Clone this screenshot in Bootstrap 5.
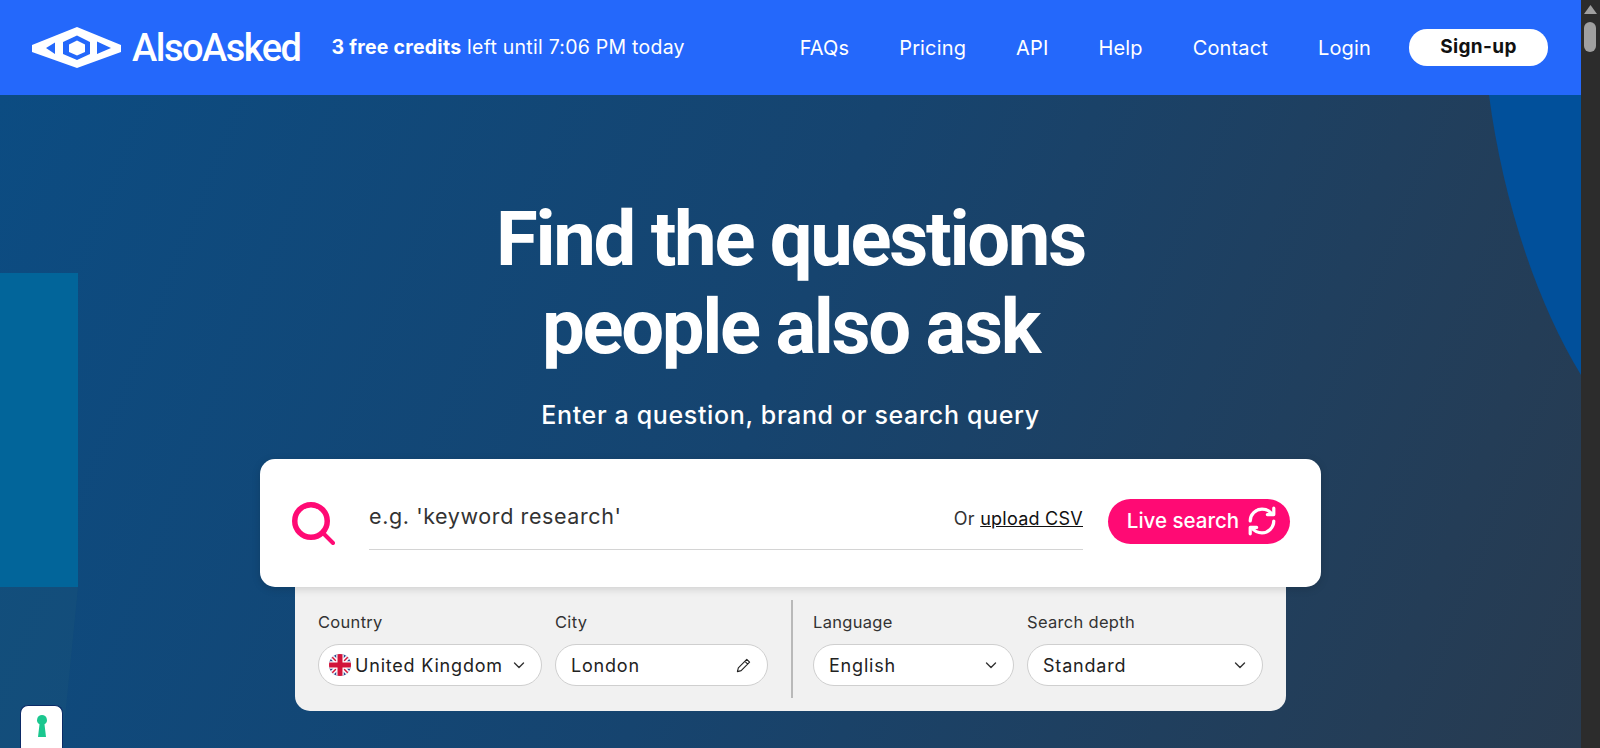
<!DOCTYPE html>
<html lang="en">

<head>
    <meta charset="UTF-8">
    <meta name="viewport" content="width=device-width, initial-scale=1.0">
    <title>AlsoAsked</title>
    <link href="https://cdn.jsdelivr.net/npm/bootstrap@5.3.0/dist/css/bootstrap.min.css" rel="stylesheet">
    <style>
        html, body { height: 748px; overflow: hidden; }
        body { font-family: Inter, "Liberation Sans", sans-serif; color: #212529; }

        .topbar { height: 95px; background: #2468fb; padding: 0 33px 0 32px; }
        .logo-text { font: 500 38px/1 Roboto, sans-serif; letter-spacing: -1.5px; color: #fff; margin-left: 10px; }
        .credits { font-size: 19.5px; color: #fff; margin-left: 31px; letter-spacing: .25px; }
        .credits b { font-weight: 700; }
        .menu-link { color: #fff; text-decoration: none; font-size: 20px; letter-spacing: .15px; }
        .menu-gap { gap: 50px; margin-right: 38px; }
        .signup { width: 139px; height: 37px; background: #fff; border-radius: 18px; color: #111; font-weight: 700; font-size: 19px; letter-spacing: .35px; text-decoration: none; }

        .hero { height: 653px; background: linear-gradient(112deg, #0c4c82 0%, #16446f 48%, #283b50 100%); overflow: hidden; }
        .hero-bg { position: absolute; top: 0; left: 0; }
        .hero-body { padding-top: 100px; z-index: 1; }
        .headline { font: 700 76px/88px Roboto, sans-serif; letter-spacing: -2.3px; color: #fff; margin: 0; }
        .subline { font-size: 25px; font-weight: 500; letter-spacing: .65px; color: #fff; margin: 28px 0 28px; line-height: 32px; }

        .search-card { width: 1061px; height: 128px; background: #fff; border-radius: 15px; padding: 0 30px 0 32px; box-shadow: 0 2px 8px rgba(0,0,0,.15); z-index: 2; }
        .search-field { width: 714px; height: 91px; margin-left: 34px; border-bottom: 1px solid #d4d4d4; padding-top: 41px; }
        .search-ph { font-size: 21.5px; letter-spacing: .6px; color: #333; line-height: 32px; }
        .upload { font-size: 18px; letter-spacing: .25px; color: #333; margin-top: 7px; line-height: 24px; }
        .upload a { color: #111; }
        .live-btn { width: 182px; height: 45px; background: #ff0a74; border-radius: 23px; color: #fff; font-size: 20.5px; font-weight: 500; margin: 0 0 4px 25px; border: 0; padding: 0 0 0 6px; }

        .options { width: 991px; height: 124px; background: #f1f1f1; border-radius: 0 0 15px 15px; padding: 13px 23px 0; }
        .opt-set { gap: 13px; }
        .opt-label { font-size: 16.5px; letter-spacing: .3px; color: #333; line-height: 20px; margin: 12px 0 12px; display: block; }
        .opt-box { height: 42px; background: #fff; border: 1px solid #cfcfcf; border-radius: 21px; font-size: 18px; letter-spacing: .8px; color: #222; padding: 0 16px 0 15px; }
        .opt-country { width: 224px; padding-left: 10px; }
        .opt-city { width: 213px; }
        .opt-lang { width: 201px; }
        .opt-depth { width: 236px; }
        .opt-rule { width: 2px; height: 98px; background: #b9b9b9; margin: 0 20px 0 23px; }

        .lock-tab { position: absolute; left: 20px; bottom: 0; width: 43px; height: 43px; background: #fff; border-radius: 8px 8px 0 0; border: 1px solid #0b2a66; border-bottom: 0; z-index: 3; }

        .scroll-bar { width: 19px; height: 748px; background: #2c2c2c; padding-top: 5px; }
        .scroll-thumb { width: 12px; height: 30px; background: #a0a0a0; border-radius: 6px; margin: 8px 0 0 3px; }
    </style>
</head>

<body class="d-flex m-0">
    <div class="flex-grow-1 position-relative">
        <nav class="topbar d-flex align-items-center">
            <svg width="90" height="42" viewBox="0 0 90 42">
                <path fill="#fff" fill-rule="evenodd" d="M0 18 45 0 89 18V25L45 41 0 25ZM14 21 23 15.500V27ZM65 14.500 79 21 65 27ZM45 8.500 58 15V27L45 33 31 27V15Z"/>
                <path fill="#fff" d="M45 13.500 53 17.500V25L45 28.500 37 25V17.500Z"/>
            </svg>
            <span class="logo-text">AlsoAsked</span>
            <span class="credits"><b>3 free credits</b> left until 7:06 PM today</span>
            <div class="d-flex align-items-center ms-auto">
                <div class="d-flex menu-gap">
                    <a class="menu-link" href="#">FAQs</a>
                    <a class="menu-link" href="#">Pricing</a>
                    <a class="menu-link" href="#">API</a>
                    <a class="menu-link" href="#">Help</a>
                    <a class="menu-link" href="#">Contact</a>
                    <a class="menu-link" href="#">Login</a>
                </div>
                <a class="signup d-flex align-items-center justify-content-center" href="#">Sign-up</a>
            </div>
        </nav>

        <section class="hero position-relative">
            <svg class="hero-bg" width="1581" height="653" viewBox="0 0 1581 653">
                <path fill="#01509b" d="M1489 0C1502 100 1535 205 1581 280V0Z"/>
                <rect x="0" y="178" width="78" height="314" fill="#02659a"/>
                <path fill="#1e5a78" fill-opacity=".25" d="M0 492H78L62 653H0Z"/>
            </svg>

            <div class="hero-body position-relative d-flex flex-column align-items-center text-center">
                <h1 class="headline">Find the questions<br>people also ask</h1>
                <p class="subline">Enter a question, brand or search query</p>

                <div class="search-card d-flex align-items-center position-relative">
                    <svg width="43" height="43" viewBox="0 0 43 43" fill="none" stroke="#ff0a74">
                        <circle cx="19" cy="19" r="16.250" stroke-width="5.500"/>
                        <path d="M31 31 41 41" stroke-width="4" stroke-linecap="round"/>
                    </svg>
                    <div class="search-field d-flex justify-content-between align-self-start">
                        <span class="search-ph">e.g. 'keyword research'</span>
                        <span class="upload">Or <a href="#">upload CSV</a></span>
                    </div>
                    <button class="live-btn d-flex align-items-center justify-content-center gap-2" type="button">
                        Live search
                        <svg width="30" height="30" viewBox="0 0 28 28" fill="none" stroke="#fff" stroke-width="3" stroke-linecap="round" stroke-linejoin="round">
                            <path d="M3 14C3 8 8 3 14 3C18 3 21 4.500 23.500 7.500"/>
                            <path d="M25 14C25 20 20 25 14 25C10 25 7 23.500 4.500 20.500"/>
                            <path d="M25 2V8H19"/>
                            <path d="M3 26V20H9"/>
                        </svg>
                    </button>
                </div>

                <div class="options d-flex text-start">
                    <div class="d-flex opt-set">
                        <div>
                            <span class="opt-label">Country</span>
                            <div class="opt-box opt-country d-flex align-items-center">
                                <svg class="flex-shrink-0 me-1" width="22" height="22" viewBox="0 0 22 22">
                                    <clipPath id="flagClip"><circle cx="11" cy="11" r="11"/></clipPath>
                                    <g clip-path="url(#flagClip)">
                                        <rect width="22" height="22" fill="#2b4a8f"/>
                                        <path d="M0 0 22 22M22 0 0 22" stroke="#fff" stroke-width="4.500"/>
                                        <path d="M0 0 22 22M22 0 0 22" stroke="#d2143a" stroke-width="1.500"/>
                                        <path d="M11 0V22M0 11H22" stroke="#fff" stroke-width="7.500"/>
                                        <path d="M11 0V22M0 11H22" stroke="#d2143a" stroke-width="5"/>
                                    </g>
                                </svg>
                                <span class="flex-grow-1 text-nowrap">United Kingdom</span>
                                <svg class="flex-shrink-0" width="12" height="12" viewBox="0 0 12 12" fill="none" stroke="#333" stroke-width="1.400" stroke-linecap="round" stroke-linejoin="round"><path d="M1.500 4 6 8.500 10.500 4"/></svg>
                            </div>
                        </div>
                        <div>
                            <span class="opt-label">City</span>
                            <div class="opt-box opt-city d-flex align-items-center justify-content-between">
                                <span>London</span>
                                <svg width="15" height="15" viewBox="0 0 16 16" fill="none" stroke="#222" stroke-width="1.200" stroke-linejoin="round"><path d="M11.500 1.500 14.500 4.500 5.500 13.500 1.500 14.500 2.500 10.500ZM9.500 3.500 12.500 6.500"/></svg>
                            </div>
                        </div>
                    </div>
                    <div class="opt-rule"></div>
                    <div class="d-flex opt-set">
                        <div>
                            <span class="opt-label">Language</span>
                            <div class="opt-box opt-lang d-flex align-items-center justify-content-between">
                                <span>English</span>
                                <svg width="12" height="12" viewBox="0 0 12 12" fill="none" stroke="#333" stroke-width="1.400" stroke-linecap="round" stroke-linejoin="round"><path d="M1.500 4 6 8.500 10.500 4"/></svg>
                            </div>
                        </div>
                        <div>
                            <span class="opt-label">Search depth</span>
                            <div class="opt-box opt-depth d-flex align-items-center justify-content-between">
                                <span>Standard</span>
                                <svg width="12" height="12" viewBox="0 0 12 12" fill="none" stroke="#333" stroke-width="1.400" stroke-linecap="round" stroke-linejoin="round"><path d="M1.500 4 6 8.500 10.500 4"/></svg>
                            </div>
                        </div>
                    </div>
                </div>
            </div>
        </section>

        <div class="lock-tab d-flex justify-content-center">
            <svg class="mt-2" width="14" height="24" viewBox="0 0 14 24"><path fill="#1bc78f" d="M7 1A5 5 0 0 1 9.500 10.300L11 23H3L4.500 10.300A5 5 0 0 1 7 1Z"/></svg>
        </div>
    </div>

    <div class="scroll-bar flex-shrink-0">
        <svg class="d-block mx-auto" width="13" height="9" viewBox="0 0 13 9"><path fill="#a0a0a0" d="M6.500 0 13 9H0Z"/></svg>
        <div class="scroll-thumb"></div>
    </div>

    <script src="https://cdn.jsdelivr.net/npm/bootstrap@5.3.0/dist/js/bootstrap.bundle.min.js"></script>
</body>

</html>
